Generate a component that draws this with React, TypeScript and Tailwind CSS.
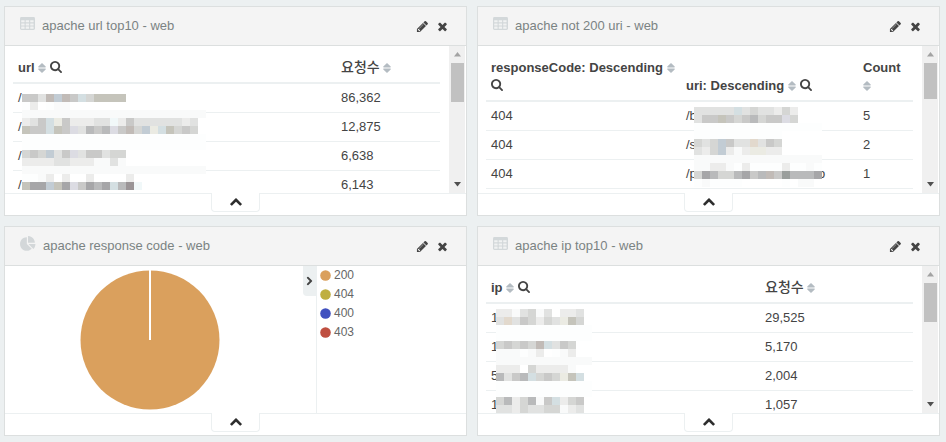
import React from "react";

const PALETTE: Record<string, string> = {
  w: "#ffffff",
  v: "#fdfefe",
  a: "#f9fafa",
  b: "#ececeb",
  c: "#e1e2e1",
  d: "#d5d6d4",
  e: "#c9c9c8",
  f: "#b9babb",
  g: "#a6a6a8",
  q: "#9a9e9c",
  m: "#9a9496",
  h: "#d4dfe2",
  i: "#c2ccd4",
  j: "#ebebe3",
  k: "#c5c4bb",
  l: "#c1bbb7",
  n: "#dcdce3",
  o: "#f1f8f9",
  p: "#e2d9cd",
};

const CELL = 8;

/* Pixelated cover for private values; each letter is one cell, a dot is left open. */
function Mosaic({ rows }: { rows: string[] }) {
  const cols = Math.max(...rows.map((r) => r.length));
  return (
    <svg
      aria-hidden="true"
      width={cols * CELL}
      height={rows.length * CELL}
      shapeRendering="crispEdges"
    >
      {rows.flatMap((row, y) =>
        row
          .split("")
          .map((c, x) =>
            c === "." ? null : (
              <rect
                key={`${x}-${y}`}
                x={x * CELL}
                y={y * CELL}
                width={CELL}
                height={CELL}
                fill={PALETTE[c]}
              />
            ),
          ),
      )}
    </svg>
  );
}

function TableIcon() {
  return (
    <svg className="mb-[5px] h-[13px] w-[15px]" viewBox="0 0 15 13" aria-hidden="true">
      <rect width="15" height="13" rx="1.4" fill="#d3d8da" />
      {[3.2, 6.4, 9.6].map((y) =>
        [1.2, 5.7, 10.2].map((x) => (
          <rect key={`${x}-${y}`} x={x} y={y} width="3.4" height="2.1" rx="0.3" fill="#f1f2f2" />
        )),
      )}
    </svg>
  );
}

function PieIcon() {
  return (
    <svg className="mb-1 size-4" viewBox="0 0 1792 1792" fill="#d3d7d9" aria-hidden="true">
      <path d="M768 890l546 546q-106 108-247.5 168t-298.5 60q-209 0-385.5-103t-279.5-279.5-103-385.5 103-385.5 279.5-279.5 385.5-103v762zm187 6h773q0 157-60 298.5t-168 247.5zm709-128h-768v-768q209 0 385.5 103t279.5 279.5 103 385.5z" />
    </svg>
  );
}

function PencilIcon() {
  return (
    <svg className="size-[13px]" viewBox="0 0 1792 1792" fill="currentColor" aria-hidden="true">
      <path d="M491 1536l91-91-235-235-91 91v107h128v128h107zm523-928q0-22-22-22-10 0-17 7l-542 542q-7 7-7 17 0 22 22 22 10 0 17-7l542-542q7-7 7-17zm-54-192l416 416-832 832h-416v-416zm683 96q0 53-37 90l-166 166-416-416 166-165q36-38 90-38 53 0 91 38l235 234q37 39 37 91z" />
    </svg>
  );
}

function TimesIcon() {
  return (
    <svg className="size-[13px]" viewBox="0 0 1792 1792" fill="currentColor" aria-hidden="true">
      <path d="M1490 1322q0 40-28 68l-136 136q-28 28-68 28t-68-28l-294-294-294 294q-28 28-68 28t-68-28l-136-136q-28-28-28-68t28-68l294-294-294-294q-28-28-28-68t28-68l136-136q28-28 68-28t68 28l294 294 294-294q28-28 68-28t68 28l136 136q28 28 28 68t-28 68l-294 294 294 294q28 28 28 68z" />
    </svg>
  );
}

function SearchIcon() {
  return (
    <svg className="size-3" viewBox="64 128 1664 1664" fill="currentColor" aria-hidden="true">
      <path d="M1216 832q0-185-131.5-316.5t-316.5-131.5-316.5 131.5-131.5 316.5 131.5 316.5 316.5 131.5 316.5-131.5 131.5-316.5zm512 832q0 52-38 90t-90 38q-54 0-90-38l-343-342q-179 124-399 124-143 0-273.5-55.5t-225-150-150-225-55.5-273.5 55.5-273.5 150-225 225-150 273.5-55.5 273.5 55.5 225 150 150 225 55.5 273.5q0 220-124 399l343 343q37 37 37 90z" />
    </svg>
  );
}

function SortIcon() {
  return (
    <svg className="h-[10px] w-2" viewBox="0 0 8 10" fill="#b4bcc2" aria-hidden="true">
      <path d="M4 0L7.7 3.6Q8 4.4 7.4 4.4H.6Q0 4.4 .3 3.6ZM4 10L7.7 6.4Q8 5.6 7.4 5.6H.6Q0 5.6 .3 6.4Z" />
    </svg>
  );
}

function ChevronIcon({ className }: { className: string }) {
  return (
    <svg className={className} viewBox="90 450 1612 1100" fill="currentColor" aria-hidden="true">
      <path d="M1683 1331l-166 165q-19 19-45 19t-45-19l-531-531-531 531q-19 19-45 19t-45-19l-166-165q-19-19-19-45.5t19-45.5l742-741q19-19 45-19t45 19l742 741q19 19 19 45.5t-19 45.5z" />
    </svg>
  );
}

function Panel({
  title,
  icon,
  children,
}: {
  title: string;
  icon: React.ReactNode;
  children: React.ReactNode;
}) {
  return (
    <section className="flex min-w-0 flex-col border border-[#dcdfdf] bg-white">
      <header className="flex h-[39px] items-center justify-between border-b border-[#dcdfdf] bg-[#f4f4f4] pr-[17px] pl-[15px]">
        <h2 className="flex items-center gap-[7px] text-[#7b8383]">
          {icon}
          {title}
        </h2>
        <div className="flex gap-[7px] text-[#444]">
          <button type="button" aria-label="Edit">
            <PencilIcon />
          </button>
          <button type="button" aria-label="Remove">
            <TimesIcon />
          </button>
        </div>
      </header>
      <div className="flex h-[147px] overflow-hidden">{children}</div>
      <footer className="flex h-[22px] justify-center border-t border-[#ecf0f1]">
        <button
          type="button"
          aria-label="Show details"
          className="-mt-px flex h-[19px] w-[49px] items-center justify-center rounded-b border border-t-0 border-[#ecf0f1] bg-white text-[#2d2d2d]"
        >
          <ChevronIcon className="h-2 w-3" />
        </button>
      </footer>
    </section>
  );
}

function Scrollbar({ tall }: { tall: boolean }) {
  return (
    <div
      aria-hidden="true"
      className="mr-px flex w-4 shrink-0 flex-col items-center bg-[#f0f0f0]"
    >
      <svg className="my-[6px] h-[5px] w-[7px]" viewBox="0 0 7 5" fill="#a3a3a3">
        <path d="M3.5 0L7 4.5H0Z" />
      </svg>
      <div className={`w-[13px] bg-[#c1c1c1] ${tall ? "h-[39px]" : "h-9"}`} />
      <svg className="mt-auto mb-[6px] h-[5px] w-[7px]" viewBox="0 0 7 5" fill="#505050">
        <path d="M3.5 4.5L7 0H0Z" />
      </svg>
    </div>
  );
}

type Column = { name: string; width: string; search?: boolean; korean?: boolean };

function DataTable({
  columns,
  rows,
  tall = true,
  children,
}: {
  columns: Column[];
  rows: string[][];
  tall?: boolean;
  children: React.ReactNode;
}) {
  return (
    <>
      <div className="min-w-0 flex-1 pt-2 pr-[9px] pl-2">
        <div className="relative">
          <table className="w-full table-fixed border-separate border-spacing-0 text-left">
            <colgroup>
              {columns.map((c) => (
                <col key={c.name} className={c.width} />
              ))}
            </colgroup>
            <thead>
              <tr>
                {columns.map((c) => (
                  <th
                    key={c.name}
                    className="border-b-2 border-[#ecf0f1] p-[5px] align-bottom font-bold"
                  >
                    {c.korean ? (
                      <span lang="ko" className="text-[14px] leading-none font-medium">
                        {c.name}
                      </span>
                    ) : (
                      c.name
                    )}{" "}
                    <button type="button" aria-label={`Sort by ${c.name}`} className="align-[-1px]">
                      <SortIcon />
                    </button>
                    {c.search && (
                      <>
                        {" "}
                        <button
                          type="button"
                          aria-label={`Search ${c.name}`}
                          className="align-[-1px]"
                        >
                          <SearchIcon />
                        </button>
                      </>
                    )}
                  </th>
                ))}
              </tr>
            </thead>
            <tbody>
              {rows.map((r, i) => (
                <tr key={i}>
                  {r.map((v, j) => (
                    <td key={j} className="border-b border-[#ecf0f1] p-[5px]">
                      {v}
                    </td>
                  ))}
                </tr>
              ))}
            </tbody>
          </table>
          {children}
        </div>
      </div>
      <Scrollbar tall={tall} />
    </>
  );
}

const LEGEND = [
  { label: "200", color: "#daa05d" },
  { label: "404", color: "#bfaf40" },
  { label: "400", color: "#4050bf" },
  { label: "403", color: "#bf4f40" },
];

const URL_MOSAIC = [
  "eeclilehdkkkk",
  "vb.vaa",
  "aaaaaaaaaaaaaaaaaaaaaaa",
  "bcehjebbbccobeccccccbc",
  "keehkencfefneldijhkded",
  "vvvvvvvvvvvvvvvvvvvvvvv",
  "vvvvvvvvvvvvvvvvvvvvvvv",
  "dedicenceecdd",
  "bbbbccbbbaaca",
  "aaaaaaaaaaaaaaaaaaaaaaa",
  "vvabwbwwbwwwwb",
  "kggikgnegfghfmo",
];

const URI_MOSAIC = [
  "ccccchcdccbdb",
  "ceekedefdeend",
  "vvvvvvvvvvvvvvvv",
  "vvvvvvvvvvv",
  "dcdieccpced",
  "cbdibabjjbb",
  "aaaaaaaaaaaaaaaa",
  "aabbavbvvvvbvvav",
  "dgfddfgefleqfffg",
  "vavvvv.....v.aa",
];

const IP_MOSAIC = [
  "bbacdacwbbc",
  "cpcedbdcjkd",
  "vvvvvvvvvvvv",
  "vvvvvvvvvvvv",
  "dededlhced",
  "aaavabwvab",
  "aaaaaaaaaaaa",
  "bbbwdbbbba",
  "fcefhdedjkh",
  "vvvvvvvvvvvv",
  "vvvvvvvvvvvv",
  "dfbdfaehbde",
  "ccbdccddabc",
];

export default function App() {
  return (
    <main className="min-h-screen bg-[#ecf0f1] pt-1.5 pr-1.5 pb-1.5 pl-1 font-['Liberation_Sans','Noto_Sans_CJK_KR',sans-serif] text-[13px] leading-[18px] text-[#444]">
      <div className="grid grid-cols-2 gap-2.5">
        <Panel title="apache url top10 - web" icon={<TableIcon />}>
          <DataTable
            columns={[
              { name: "url", width: "w-[323px]", search: true },
              { name: "요청수", width: "w-auto", korean: true },
            ]}
            rows={[
              ["/", "86,362"],
              ["/", "12,875"],
              ["/", "6,638"],
              ["/", "6,143"],
            ]}
          >
            <div className="absolute top-10 left-[9px]">
              <Mosaic rows={URL_MOSAIC} />
            </div>
          </DataTable>
        </Panel>

        <Panel title="apache not 200 uri - web" icon={<TableIcon />}>
          <DataTable
            tall={false}
            columns={[
              { name: "responseCode: Descending", width: "w-[195px]", search: true },
              { name: "uri: Descending", width: "w-[177px]", search: true },
              { name: "Count", width: "w-auto" },
            ]}
            rows={[
              ["404", "/b", "5"],
              ["404", "/s", "2"],
              ["404", "/p", "1"],
            ]}
          >
            <span className="absolute top-[111px] left-[332px]">o</span>
            <div className="absolute top-[53px] left-52">
              <Mosaic rows={URI_MOSAIC} />
            </div>
          </DataTable>
        </Panel>

        <Panel title="apache response code - web" icon={<PieIcon />}>
          <div className="flex flex-1 justify-center pt-1 pr-2">
            <svg className="size-[140px]" viewBox="0 0 140 140" role="img" aria-label="Response codes">
              <circle cx="70" cy="70" r="69.5" fill="#daa05d" />
              <path d="M70 0V70" stroke="#fff" strokeWidth="2" />
            </svg>
          </div>
          <button
            type="button"
            aria-label="Toggle legend"
            className="flex h-[30px] w-[13px] items-center justify-center rounded-bl bg-[#ecf0f1] text-[#444]"
          >
            <ChevronIcon className="h-1.5 w-[9px] rotate-90" />
          </button>
          <ul className="w-[150px] border-l border-[#ecf0f1] pl-[3px] text-xs leading-[19px] text-[#666]">
            {LEGEND.map((l) => (
              <li key={l.label} className="flex items-center gap-[3px]">
                <svg className="size-[11px]" viewBox="0 0 11 11" aria-hidden="true">
                  <circle cx="5.5" cy="5.5" r="5.3" fill={l.color} />
                </svg>
                {l.label}
              </li>
            ))}
          </ul>
        </Panel>

        <Panel title="apache ip top10 - web" icon={<TableIcon />}>
          <DataTable
            columns={[
              { name: "ip", width: "w-[274px]", search: true },
              { name: "요청수", width: "w-auto", korean: true },
            ]}
            rows={[
              ["1", "29,525"],
              ["1", "5,170"],
              ["5", "2,004"],
              ["1", "1,057"],
            ]}
          >
            <div className="absolute top-[35px] left-2.5">
              <Mosaic rows={IP_MOSAIC} />
            </div>
          </DataTable>
        </Panel>
      </div>
    </main>
  );
}
